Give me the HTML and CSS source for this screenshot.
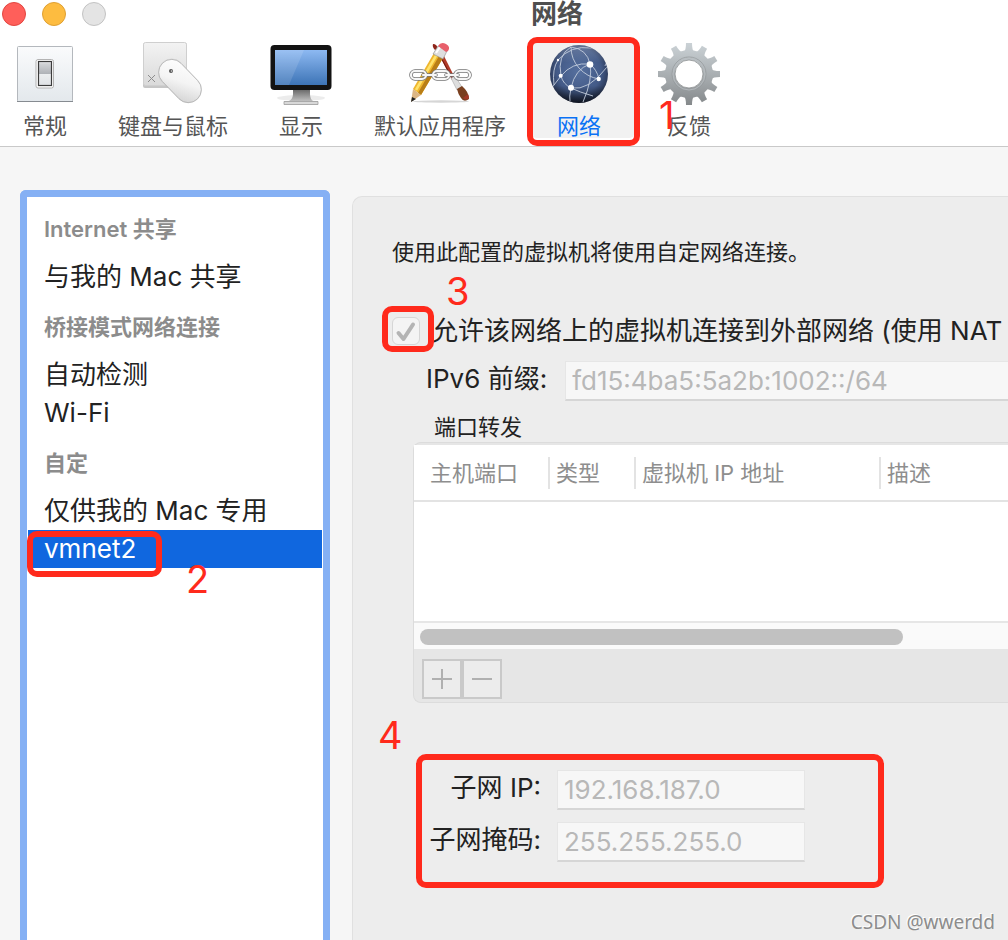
FILE: index.html
```html
<!DOCTYPE html>
<html lang="zh-CN">
<head>
    <meta charset="UTF-8">
    <title>网络</title>
    <link rel="stylesheet" href="styles.css">
</head>
<body>
    <header class="titlebar">
        <div class="lights">
            <button class="light red" aria-label="关闭"></button>
            <button class="light yellow" aria-label="最小化"></button>
            <button class="light gray" aria-label="缩放" disabled></button>
        </div>
        <h1 class="title">网络</h1>
    </header>

    <nav class="toolbar">
        <button class="tool">
            <svg class="icon" viewBox="0 0 64 64">
                <defs>
                    <linearGradient id="plate" x1="0" y1="0" x2="0" y2="1"><stop offset="0" stop-color="#fafbfc"/><stop offset="1" stop-color="#e3e8ec"/></linearGradient>
                    <linearGradient id="knob" x1="0" y1="0" x2="0" y2="1"><stop offset="0" stop-color="#e2e3e5"/><stop offset=".12" stop-color="#cfd1d4"/><stop offset=".5" stop-color="#b0b3b8"/><stop offset=".52" stop-color="#eceef0"/><stop offset="1" stop-color="#dfe2e5"/></linearGradient>
                </defs>
                <rect x="4.500" y="5.500" width="55" height="55" rx="1" fill="url(#plate)" stroke="#b4b8bd"/>
                <path d="M4 60.500h56" stroke="#868b91" stroke-width="1.200"/>
                <rect x="23" y="18.500" width="17.500" height="28.500" rx="2" fill="#fff" stroke="#b3b3b3"/>
                <rect x="25.500" y="20.500" width="13" height="24" fill="url(#knob)" stroke="#3c3c3c" stroke-width="1.200"/>
            </svg>
            <span>常规</span>
        </button>
        <button class="tool">
            <svg class="icon" viewBox="0 0 64 64">
                <defs>
                    <linearGradient id="key" x1="0" y1="0" x2="0" y2="1"><stop offset="0" stop-color="#f3f3f3"/><stop offset="1" stop-color="#dadada"/></linearGradient>
                    <linearGradient id="mouse" x1="0" y1="0" x2="1" y2="1"><stop offset="0" stop-color="#fff"/><stop offset=".5" stop-color="#f4f4f4"/><stop offset="1" stop-color="#cfcfcf"/></linearGradient>
                </defs>
                <rect x="2" y="2" width="44" height="45" rx="2" fill="#c6c6c6"/>
                <rect x="2.500" y="1.500" width="43" height="43" rx="2" fill="url(#key)" stroke="#cfcfcf"/>
                <path d="M7 34l7 7M14 34l-7 7" stroke="#8d8d8d"/>
                <rect x="13.500" y="26.500" width="51" height="27" rx="13.500" transform="rotate(46 39 40)" fill="#aaa" opacity=".35"/>
                <rect x="14" y="27" width="50" height="26" rx="13" transform="rotate(46 39 40)" fill="url(#mouse)" stroke="#b2b2b2" stroke-width=".8"/>
                <circle cx="30" cy="30" r="2" fill="#555"/>
                <circle cx="30.500" cy="30" r=".8" fill="#ddd"/>
            </svg>
            <span>键盘与鼠标</span>
        </button>
        <button class="tool">
            <svg class="icon" viewBox="0 0 64 64">
                <defs>
                    <linearGradient id="screen" x1="0" y1="0" x2="0" y2="1"><stop offset="0" stop-color="#8db9f2"/><stop offset="1" stop-color="#3d74b6"/></linearGradient>
                    <linearGradient id="neck" x1="0" y1="0" x2="0" y2="1"><stop offset="0" stop-color="#6c6c6c"/><stop offset="1" stop-color="#dcdcdc"/></linearGradient>
                </defs>
                <ellipse cx="32" cy="57" rx="24" ry="3" fill="#ececec"/>
                <path d="M24 49h17v4q0 5 3 7h5v4H15v-4h5q4-2 4-7z" fill="url(#neck)"/>
                <path d="M15 60.500h34v3H15z" fill="#d8d8d8" stroke="#a0a0a0" stroke-width=".8"/>
                <rect x="1.500" y="4" width="61" height="45" rx="4" fill="#131313"/>
                <rect x="6" y="9" width="52" height="35" fill="url(#screen)"/>
                <path d="M6 9h29L20 44H6z" fill="#fff" opacity=".12"/>
            </svg>
            <span>显示</span>
        </button>
        <button class="tool">
            <svg class="icon" viewBox="0 0 64 64">
                <ellipse cx="33" cy="60.500" rx="28" ry="1.200" fill="#d6d6d6"/>
                <!-- brush -->
                <path d="M25 3q4 0 5 5l-3 1q-3-3-2-6z" fill="#8e2419"/>
                <path d="M28 8l4-1 15 30-3 2z" fill="#b03a28"/>
                <path d="M29 9l16 30" stroke="#6d160d" stroke-width="1"/>
                <path d="M43 37l4-2 7 11-5 3z" fill="#dedede" stroke="#999" stroke-width=".5"/>
                <path d="M49 48l5-3q7 6 7 13-5 4-8-1-3-4-4-9z" fill="#7a4020"/>
                <path d="M55 57q4 3 6 0l-1-4z" fill="#a33a28"/>
                <!-- pencil -->
                <path d="M5 48L26 12l9 5-22 37z" fill="#efb62d"/>
                <path d="M10 52l21-37 4 2-22 37z" fill="#b97e16"/>
                <path d="M8 49l21-36" stroke="#ffe36c" stroke-width="2.500"/>
                <path d="M3 61l2-13 8 6z" fill="#dcb685"/>
                <path d="M3 61l1-5 4 2z" fill="#222"/>
                <path d="M25 13l5-8 9 5-4 8z" fill="#dedede" stroke="#8b8b8b" stroke-width=".6"/>
                <path d="M28 12l4-6" stroke="#fff" stroke-width="2"/>
                <path d="M30 5q3-5 8-2t2 7l-2 1z" fill="#e8606b"/>
                <!-- chain -->
                <g fill="none" stroke="#757575" stroke-width="3.600">
                    <rect x="3" y="30" width="15" height="8" rx="4"/>
                    <rect x="25" y="30" width="16" height="8" rx="4"/>
                    <rect x="47" y="30" width="15" height="8" rx="4"/>
                    <path d="M15 34h13M38 34h12" stroke-linecap="round"/>
                </g>
                <g fill="none" stroke="#f6f6f6" stroke-width="2.200">
                    <rect x="3" y="30" width="15" height="8" rx="4"/>
                    <rect x="25" y="30" width="16" height="8" rx="4"/>
                    <rect x="47" y="30" width="15" height="8" rx="4"/>
                    <path d="M15 34h13M38 34h12" stroke-linecap="round"/>
                </g>
            </svg>
            <span>默认应用程序</span>
        </button>
        <button class="tool selected" aria-current="page">
            <svg class="icon" viewBox="0 0 64 64">
                <defs>
                    <radialGradient id="globe" cx=".5" cy=".45" r=".55"><stop offset="0" stop-color="#56709f"/><stop offset=".7" stop-color="#435a87"/><stop offset="1" stop-color="#27334f"/></radialGradient>
                    <linearGradient id="shade" x1="0" y1="0" x2="0" y2="1"><stop offset="0" stop-color="#fff" stop-opacity=".2"/><stop offset=".3" stop-color="#fff" stop-opacity="0"/><stop offset=".7" stop-color="#000" stop-opacity="0"/><stop offset="1" stop-color="#000" stop-opacity=".6"/></linearGradient>
                    <clipPath id="ball"><circle cx="32" cy="33" r="28.500"/></clipPath>
                </defs>
                <circle cx="32" cy="33" r="29" fill="url(#globe)"/>
                <circle cx="32" cy="33" r="29" fill="url(#shade)"/>
                <g clip-path="url(#ball)" fill="none" stroke="#c3cddd" stroke-width=".9">
                    <path d="M24 6Q24 18 32 27T52 38"/>
                    <path d="M24 6Q40 8 43 23T36 61"/>
                    <path d="M43 23Q28 28 24 47T28 62"/>
                    <path d="M43 23Q25 21 14 35T5 47"/>
                    <path d="M43 23Q50 29 52 38"/>
                    <path d="M14 35Q16 43 24 47T46 55"/>
                    <path d="M24 47Q42 50 60 26"/>
                    <path d="M11 19Q24 4 44 7T58 25"/>
                    <path d="M14 35Q10 14 24 6M7 44Q5 28 11 19"/>
                </g>
                <g fill="#fff">
                    <circle cx="43" cy="23.500" r="3.300"/>
                    <circle cx="51.700" cy="38" r="2.200"/>
                    <circle cx="24" cy="46.700" r="3"/>
                    <circle cx="13.700" cy="34.700" r="2"/>
                    <circle cx="11" cy="19" r="1.200"/>
                </g>
            </svg>
            <span>网络</span>
        </button>
        <button class="tool">
            <svg class="icon" viewBox="0 0 64 64">
                <defs>
                    <linearGradient id="metal" gradientUnits="userSpaceOnUse" x1="0" y1="2" x2="0" y2="64"><stop offset="0" stop-color="#cbd2d6"/><stop offset=".6" stop-color="#a3a8ab"/><stop offset="1" stop-color="#85898b"/></linearGradient>
                    <mask id="gear">
                        <g fill="#fff">
                            <circle cx="32" cy="33" r="24"/>
                            <path id="tooth" d="M27 10.500Q29 9 29 2h6Q35 9 37 10.500z"/>
                            <use href="#tooth" transform="rotate(30 32 33)"/>
                            <use href="#tooth" transform="rotate(60 32 33)"/>
                            <use href="#tooth" transform="rotate(90 32 33)"/>
                            <use href="#tooth" transform="rotate(120 32 33)"/>
                            <use href="#tooth" transform="rotate(150 32 33)"/>
                            <use href="#tooth" transform="rotate(180 32 33)"/>
                            <use href="#tooth" transform="rotate(210 32 33)"/>
                            <use href="#tooth" transform="rotate(240 32 33)"/>
                            <use href="#tooth" transform="rotate(270 32 33)"/>
                            <use href="#tooth" transform="rotate(300 32 33)"/>
                            <use href="#tooth" transform="rotate(330 32 33)"/>
                        </g>
                        <circle cx="32" cy="33" r="14" fill="#000"/>
                    </mask>
                </defs>
                <rect width="64" height="66" fill="url(#metal)" mask="url(#gear)"/>
                <circle cx="32" cy="33" r="17" fill="none" stroke="#959a9d" stroke-width=".8"/>
                <circle cx="32" cy="33" r="16" fill="none" stroke="#b9bec1" stroke-width=".8"/>
                <circle cx="32" cy="33" r="14" fill="none" stroke="#8b8f91" stroke-width=".8"/>
            </svg>
            <span>反馈</span>
        </button>
    </nav>

    <main class="content">
        <aside class="sidebar">
            <h2 class="group">Internet 共享</h2>
            <button class="item">与我的 Mac 共享</button>
            <h2 class="group">桥接模式网络连接</h2>
            <button class="item">自动检测</button>
            <button class="item">Wi-Fi</button>
            <h2 class="group">自定</h2>
            <button class="item">仅供我的 Mac 专用</button>
            <button class="item active">vmnet2</button>
        </aside>

        <section class="panel">
            <p class="note">使用此配置的虚拟机将使用自定网络连接。</p>

            <div class="check-row">
                <span class="check">
                    <input type="checkbox" id="nat" checked disabled>
                    <svg viewBox="0 0 28 28"><path d="M6.500 16l5 6L21 7.500" fill="none" stroke="#b4b4b4" stroke-width="4" stroke-linecap="round" stroke-linejoin="round"/></svg>
                </span>
                <label for="nat">允许该网络上的虚拟机连接到外部网络 (使用 NAT</label>
            </div>

            <div class="prefix-row">
                <label for="prefix">IPv6 前缀:</label>
                <input class="field" type="text" id="prefix" value="fd15:4ba5:5a2b:1002::/64" disabled>
            </div>

            <h3 class="port-title">端口转发</h3>
            <div class="ports">
                <div class="table-wrap">
                    <table>
                        <thead>
                            <tr>
                                <th class="col-port"><span>主机端口</span></th>
                                <th class="col-type"><span>类型</span></th>
                                <th class="col-ip"><span>虚拟机 IP 地址</span></th>
                                <th><span>描述</span></th>
                            </tr>
                        </thead>
                        <tbody>
                            <tr><td colspan="4"></td></tr>
                        </tbody>
                    </table>
                    <div class="track"><div class="thumb"></div></div>
                </div>
                <div class="actions">
                    <button aria-label="添加" disabled><svg viewBox="0 0 24 24"><path d="M2 12h20M12 2v20"/></svg></button>
                    <button aria-label="移除" disabled><svg viewBox="0 0 24 24"><path d="M2 12h20"/></svg></button>
                </div>
            </div>

            <div class="subnet">
                <label for="ip">子网 IP:</label>
                <input class="field" type="text" id="ip" value="192.168.187.0" disabled>
                <label for="netmask">子网掩码:</label>
                <input class="field" type="text" id="netmask" value="255.255.255.0" disabled>
            </div>
        </section>
    </main>

    <!-- red step marks, drawn on top of the window -->
    <div class="box box1"></div>
    <div class="box box2"></div>
    <div class="box box3"></div>
    <div class="box box4"></div>
    <span class="step step1">1</span>
    <span class="step step2">2</span>
    <span class="step step3">3</span>
    <span class="step step4">4</span>
    <span class="watermark">CSDN @wwerdd</span>
</body>
</html>
```
FILE: styles.css
```css
* {
    box-sizing: border-box;
}
body {
    margin: 0;
    height: 100vh;
    display: flex;
    flex-direction: column;
    position: relative;
    overflow: hidden;
    background-color: #f6f6f6;
    color: #222;
    font-family: Inter, "Noto Sans CJK SC", sans-serif;
    font-size: 26px;
    white-space: nowrap;
}
button, input {
    font: inherit;
    color: inherit;
    margin: 0;
    padding: 0;
    border: 0;
    background: none;
}
h1, h2, h3, p {
    margin: 0;
}

/* title bar */
.titlebar {
    display: flex;
    height: 28px;
    background-color: white;
}
.lights {
    display: flex;
    align-items: center;
    gap: 16px;
    padding-left: 2px;
}
.light {
    width: 24px;
    height: 24px;
    border-radius: 50%;
}
.red {
    background-color: #ff5f5a;
    border: 1px solid #e24640;
}
.yellow {
    background-color: #fdbc40;
    border: 1px solid #dfa033;
}
.gray {
    background-color: #e4e4e4;
    border: 1px solid #c3c3c3;
}
.title {
    flex: 1;
    text-align: center;
    font-size: 26px;
    font-weight: 600;
    line-height: 28px;
    color: #4f4f4f;
}

/* toolbar */
.toolbar {
    display: flex;
    padding: 10px 0 8px;
    margin-left: -3px;
    background-color: white;
    border-bottom: 1px solid #c9c9c9;
}
.tool {
    display: flex;
    flex-direction: column;
    align-items: center;
    gap: 10px;
    min-width: 96px;
    padding: 3px 25px 1px;
    font-size: 22px;
    line-height: 22px;
    color: #555;
}
.icon {
    width: 64px;
    height: 64px;
    margin: 0 -10px;
    overflow: visible;
}
.selected {
    padding: 3px 34px 1px 26px;
    margin-right: 6px;
    background-color: #f1f1f1;
    border-radius: 6px;
    color: #0a72f5;
}

/* content */
.content {
    flex: 1;
    display: flex;
    gap: 22px;
    padding: 43px 0 0 20px;
}
.sidebar {
    width: 310px;
    flex-shrink: 0;
    display: flex;
    flex-direction: column;
    padding: 1px;
    background-color: white;
    border: 7px solid #85b0f4;
    border-bottom: 0;
    border-radius: 6px 6px 0 0;
}
.group {
    padding: 2px 16px 0;
    font-size: 22px;
    font-weight: 600;
    line-height: 58px;
    color: #8c8c8c;
}
.item {
    padding: 0 16px;
    line-height: 38px;
    text-align: left;
}
.active {
    background-color: #1067df;
    color: white;
}

.panel {
    flex: 1;
    min-width: 0;
    margin-top: 6px;
    padding: 39px 0 0 39px;
    background-color: #ededed;
    border: 1px solid #e0e0e0;
    border-width: 1px 0 0 1px;
    border-radius: 10px 0 0 0;
}
.note {
    font-size: 22px;
    line-height: 32px;
}
.check-row {
    display: flex;
    align-items: center;
    gap: 12px;
    margin-top: 43px;
    line-height: 40px;
}
.check {
    display: grid;
}
.check input {
    appearance: none;
    grid-area: 1 / 1;
    width: 28px;
    height: 28px;
    background-color: #f4f4f4;
    border: 1px solid #d6d6d6;
    border-radius: 6px;
}
.check svg {
    grid-area: 1 / 1;
    width: 28px;
    height: 28px;
}
.prefix-row {
    display: flex;
    align-items: center;
    gap: 18px;
    margin-top: 10px;
    padding-left: 34px;
}
.prefix-row label,
.subnet label {
    padding-bottom: 4px;
    line-height: 32px;
}
.field {
    height: 40px;
    padding: 0 6px;
    background-color: #f7f7f7;
    border: 1px solid #e6e6e6;
    border-bottom: 2px solid #d6d6d6;
    color: #b8b8b8;
}
.prefix-row .field {
    flex: 1;
    min-width: 0;
    border-right: 0;
}
.port-title {
    padding: 11px 0 0 42px;
    font-size: 22px;
    font-weight: 400;
    line-height: 30px;
}
.ports {
    margin-left: 21px;
    background-color: #e6e6e6;
    border: 1px solid #dcdcdc;
    border-right: 0;
    border-radius: 8px 0 0 8px;
    padding-top: 2px;
}
.table-wrap {
    background-color: white;
}
table {
    width: 100%;
    table-layout: fixed;
    border-collapse: collapse;
}
th {
    padding: 0;
    height: 56px;
    font-size: 22px;
    font-weight: 400;
    text-align: left;
    color: #8e8e8e;
    border-bottom: 2px solid #e3e3e3;
}
th span {
    display: block;
    padding-left: 6px;
    line-height: 32px;
    border-left: 2px solid #e3e3e3;
}
.col-port {
    width: 134px;
}
.col-port span {
    padding-left: 16px;
    border-left: 0;
}
.col-type {
    width: 86px;
}
.col-ip {
    width: 245px;
}
td {
    height: 120px;
    padding: 0;
}
.track {
    height: 30px;
    padding: 6px;
    background-color: #fafafa;
    border: 2px solid #e6e6e6;
    border-width: 2px 0;
}
.thumb {
    width: 83%;
    height: 16px;
    border-radius: 8px;
    background-color: #c1c1c1;
}
.actions {
    display: flex;
    padding: 8px 8px 3px;
}
.actions button {
    width: 40px;
    height: 40px;
    border: 2px solid #c9c9c9;
    background-color: #ececec;
    display: grid;
    place-items: center;
}
.actions svg {
    width: 24px;
    height: 24px;
    fill: none;
    stroke: #b0b0b0;
    stroke-width: 2;
}
.subnet {
    display: grid;
    grid-template-columns: 149px 248px;
    align-items: center;
    gap: 12px 16px;
    margin-top: 67px;
}
.subnet label {
    text-align: right;
}

/* step marks */
.box {
    position: absolute;
    border: 6px solid #ff2a1c;
    border-radius: 10px;
}
.box1 {
    left: 527px;
    top: 37px;
    width: 113px;
    height: 109px;
}
.box2 {
    left: 27px;
    top: 531px;
    width: 135px;
    height: 46px;
}
.box3 {
    left: 382px;
    top: 306px;
    width: 52px;
    height: 46px;
}
.box4 {
    left: 416px;
    top: 754px;
    width: 468px;
    height: 134px;
}
.step {
    position: absolute;
    font-size: 38px;
    font-weight: 400;
    line-height: 40px;
    color: #ff2a1c;
}
.step1 {
    left: 659px;
    top: 95px;
}
.step2 {
    left: 186px;
    top: 559px;
}
.step3 {
    left: 446px;
    top: 271px;
}
.step4 {
    left: 378px;
    top: 715px;
}
.watermark {
    position: absolute;
    right: 13px;
    bottom: 4px;
    font-family: "Noto Sans", sans-serif;
    font-size: 19px;
    line-height: 28px;
    color: #8c8c8c;
    text-shadow: -1px -1px 0 white;
}
```
